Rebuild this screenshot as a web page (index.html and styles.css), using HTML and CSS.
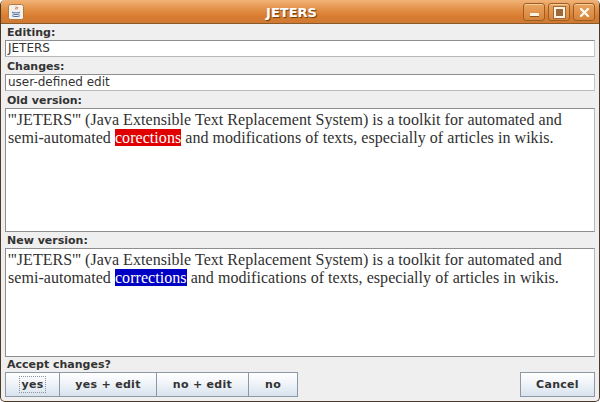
FILE: index.html
```html
<!DOCTYPE html>
<html>
<head>
<meta charset="utf-8">
<link rel="stylesheet" href="styles.css">
</head>
<body>
<div class="window">
  <div class="titlebar">
    <div class="appicon">
      <svg width="16" height="16" viewBox="0 0 16 16">
        <rect x="0.5" y="0.5" width="15" height="15" rx="2" fill="#f4f1ea" stroke="#b07a45"/>
        <path d="M8 2.5c1.2 1 -1.2 1.8 0 3 M9.5 3c0.8 0.8 -0.8 1.4 0 2.2" stroke="#d24a2a" stroke-width="0.9" fill="none"/>
        <path d="M4 8.2c2 0.9 6 0.9 8 0 M4.5 10c2 0.8 5 0.8 7 0 M4 11.8c2.5 1 5.5 1 8 0" stroke="#3a64a8" stroke-width="0.9" fill="none"/>
      </svg>
    </div>
    <div class="title">JETERS</div>
    <div class="wbtns">
      <div class="wbtn"><span class="g-min"></span></div>
      <div class="wbtn"><span class="g-max"></span></div>
      <div class="wbtn">
        <svg width="11" height="11" viewBox="0 0 11 11"><path d="M2 2L9 9M9 2L2 9" stroke="#fff8ec" stroke-width="2.4" stroke-linecap="round"/></svg>
      </div>
    </div>
  </div>
  <div class="content">
    <div class="label">Editing:</div>
    <div class="field">JETERS</div>
    <div class="label">Changes:</div>
    <div class="field">user-defined edit</div>
    <div class="label">Old version:</div>
    <div class="area area-old">'''JETERS''' (Java Extensible Text Replacement System) is a toolkit for automated and <span class="nw">semi-automated</span> <span class="del">corections</span> and modifications of texts, especially of articles in wikis.</div>
    <div class="label">New version:</div>
    <div class="area area-new">'''JETERS''' (Java Extensible Text Replacement System) is a toolkit for automated and <span class="nw">semi-automated</span> <span class="ins">corrections</span> and modifications of texts, especially of articles in wikis.</div>
    <div class="label">Accept changes?</div>
    <div class="buttons">
      <div class="group">
        <div class="btn b-yes"><span class="focus">yes</span></div>
        <div class="btn b-yesedit">yes + edit</div>
        <div class="btn b-noedit">no + edit</div>
        <div class="btn b-no">no</div>
      </div>
      <div class="btn b-cancel">Cancel</div>
    </div>
  </div>
</div>
</body>
</html>
```
FILE: styles.css
```css
html, body {
  margin: 0;
  padding: 0;
  width: 600px;
  height: 402px;
  overflow: hidden;
  background: #ffffff;
}
.window {
  width: 600px;
  height: 402px;
  box-sizing: border-box;
  border: 1px solid #4e3a28;
  border-top: none;
  border-radius: 5px 5px 5px 5px;
  overflow: hidden;
  background: #efefef;
  display: flex;
  flex-direction: column;
  font-family: "DejaVu Sans", sans-serif;
}
.titlebar {
  height: 24px;
  flex: none;
  display: flex;
  align-items: center;
  background: linear-gradient(#f1b377 0%, #e39148 40%, #d97c30 70%, #cf7a33 100%);
  border-bottom: 1px solid #8a5a2a;
  box-sizing: border-box;
  padding: 0 4px 0 7px;
}
.appicon {
  width: 16px;
  height: 16px;
  display: flex;
  margin-top: 1px;
}
.title {
  flex: 1;
  text-align: center;
  color: #ffffff;
  font-weight: bold;
  font-size: 13px;
  text-shadow: 1px 1px 1px #6b3c10;
  padding-left: 36px;
  margin-top: 1px;
}
.wbtns {
  display: flex;
  gap: 3px;
  margin-top: 1px;
}
.wbtn {
  width: 22px;
  height: 18px;
  box-sizing: border-box;
  border: 1px solid #9a5e24;
  border-radius: 3px;
  background: linear-gradient(#eaa562, #d7843a);
  box-shadow: inset 0 1px 0 rgba(255,235,200,0.6);
  display: flex;
  align-items: center;
  justify-content: center;
}
.g-min {
  width: 9px;
  height: 3px;
  background: #fff3e0;
  margin-top: 6px;
  border: 1px solid #8a5520;
  border-width: 0 0 1px 0;
}
.g-max {
  width: 7px;
  height: 7px;
  border: 2px solid #fff3e0;
  background: #9b6a3c;
  outline: 1px solid #a36a36;
}
.content {
  flex: 1;
  display: flex;
  flex-direction: column;
  padding: 2px 4px 4px 4px;
}
.label {
  font-size: 11px;
  font-weight: bold;
  color: #333333;
  height: 14px;
  line-height: 14px;
  padding-left: 2px;
}
.field {
  height: 17px;
  box-sizing: border-box;
  background: #ffffff;
  border: 1px solid #8e8e8e;
  border-right-color: #c8c8c8;
  border-bottom-color: #b8b8b8;
  font-size: 12px;
  line-height: 15px;
  color: #333333;
  padding-left: 2px;
  margin-bottom: 3px;
  white-space: nowrap;
}
.area {
  box-sizing: border-box;
  background: #ffffff;
  border: 1px solid #8e8e8e;
  border-right-color: #b8b8b8;
  border-bottom-color: #8e8e8e;
  font-family: "Liberation Serif", serif;
  font-size: 16px;
  line-height: 18px;
  letter-spacing: 0.05px;
  color: #303030;
  padding: 2px 2px;
  margin-bottom: 2px;
}
.area-old { height: 124px; }
.area-new { height: 109px; margin-bottom: 1px; }
.nw { white-space: nowrap; }
.del {
  background: #e00000;
  color: #ffffff;
}
.ins {
  background: #0000c4;
  color: #ffffff;
}
.buttons {
  display: flex;
  justify-content: space-between;
}
.group {
  display: flex;
}
.btn {
  height: 25px;
  box-sizing: border-box;
  border: 1px solid #8d98a6;
  background: linear-gradient(#ffffff 0%, #f2f5f9 40%, #d8e3ee 100%);
  font-size: 11px;
  font-weight: bold;
  color: #333333;
  letter-spacing: 0.3px;
  display: flex;
  align-items: center;
  justify-content: center;
}
.group .btn + .btn { border-left: none; }
.b-yes { width: 55px; }
.b-yesedit { width: 97px; }
.b-noedit { width: 92px; }
.b-no { width: 49px; }
.b-cancel { width: 75px; }
.focus {
  border: 1px dotted #8a96a6;
  padding: 0 1px;
  line-height: 15px;
}
```
